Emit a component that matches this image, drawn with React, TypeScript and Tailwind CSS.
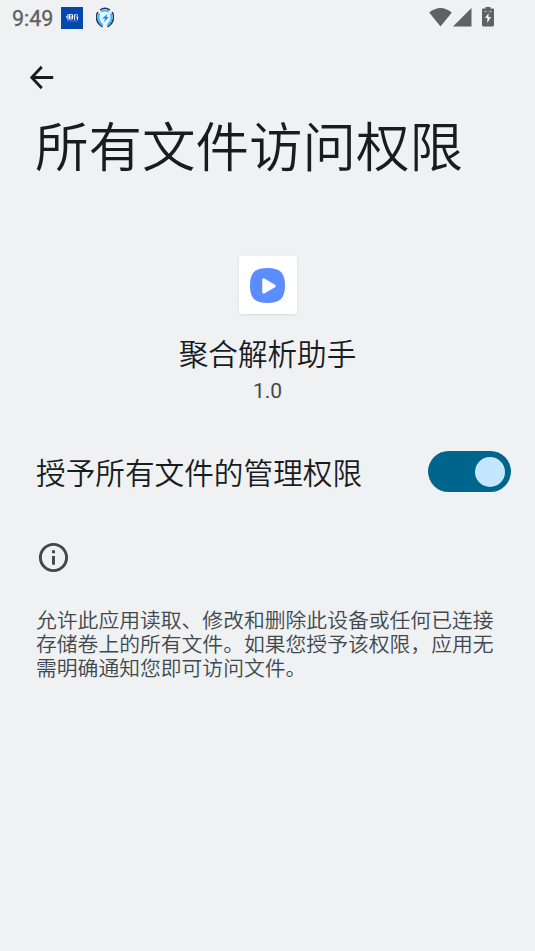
function StatusBar() {
  return (
    <header className="flex h-9 items-center pl-3 pr-[41px] text-[#606163]">
      <span className="w-[42px] pt-px text-[21.5px] leading-[34px] [-webkit-text-stroke:0.3px_#606163]">9:49</span>
      <svg className="ml-[7px] h-[22px] w-[22px]" viewBox="0 0 22 22">
        <rect width="22" height="22" fill="#0647ad" />
        <path d="M7 7v6M5.800 9v2M8.500 7.700h3v4.300h-3zM8.500 10h3M13.700 7.500v5.500M12.800 9.500l1.800-2.500M15.500 8h1.500M15.200 10h2M16.500 10v3" stroke="#fff" strokeWidth="1" fill="none" />
        <path d="M6 14h11" stroke="#7ea1d6" strokeWidth=".6" />
      </svg>
      <svg className="ml-[13px] h-[22px] w-[18px]" viewBox="0 0 18 22">
        <ellipse cx="9" cy="11" rx="7" ry="8.500" fill="#e6f6ff" />
        <path d="M4 3Q9-.5 14 3M1.800 5C-.2 9 .3 14 3.500 17.500l3 2.500M16.200 5c2 4 1.500 9-1.700 12.500l-3 2.500" fill="none" stroke="#243551" strokeWidth="1.500" />
        <path d="M5 4.700Q9 2.200 13 4.700M3.300 6.500c-1.500 4-1 7.500 1.500 10l2 1.500M14.700 6.500c1.500 4 1 7.500-1.500 10l-2 1.500" fill="none" stroke="#45b5fa" strokeWidth="2" />
        <path d="m11.500 7-5.500 4.500h3L8 15l5-5h-2.500z" fill="#218ff2" />
      </svg>
      <div className="ml-auto flex items-center">
        <svg className="mb-px h-[19px] w-[23px]" viewBox="0 0 23 19" fill="currentColor">
          <path d="M.2 4.500Q11.500-4.500 22.800 4.500L11.500 18.500z" />
        </svg>
        <svg className="mb-px ml-px h-[19px] w-[19px]" viewBox="0 0 19 19" fill="currentColor">
          <path d="M18.500 0v18.500H0z" />
        </svg>
        <svg className="mb-[2px] ml-[10px] h-5 w-3" viewBox="0 0 12 20" fill="currentColor">
          <path fillRule="evenodd" d="M3.500 0h5v1.500H11a1 1 0 0 1 1 1V18a1.500 1.500 0 0 1-1.500 1.500h-9A1.500 1.500 0 0 1 0 18V2.500a1 1 0 0 1 1-1h2.500zM2.500 4v.7h2V4zM7.500 4v.7h2V4zM6.500 6 3 11h2.300v5L9 10H6.500z" />
        </svg>
      </div>
    </header>
  );
}

function AppIcon() {
  return (
    <div className="flex h-[58px] w-[58px] items-center justify-center rounded-[3px] bg-white shadow-[0_1px_3px_rgba(0,0,0,0.1)]">
      <svg className="h-[35px] w-[35px]" viewBox="0 0 36 36">
        <path d="M18 0c13 0 18 5 18 18s-5 18-18 18S0 31 0 18 5 0 18 0z" fill="#5c8dff" />
        <path d="M14 12v13l11-6.500z" fill="#fff" stroke="#fff" strokeWidth="2.800" strokeLinejoin="round" />
      </svg>
    </div>
  );
}

function Toggle() {
  return (
    <button
      type="button"
      role="switch"
      aria-checked="true"
      aria-label="授予所有文件的管理权限"
      className="mb-1 flex h-[41px] w-[83px] items-center justify-end rounded-full bg-[#00658d] pr-[6px]"
    >
      <span className="h-[30px] w-[30px] rounded-full bg-[#c4e7ff]" />
    </button>
  );
}

export default function App() {
  return (
    <main className="flex h-[951px] w-[535px] flex-col overflow-hidden bg-[#eff1f3] font-['Roboto','Noto_Sans_CJK_SC_DemiLight','Noto_Sans_CJK_SC',sans-serif] text-[#191c1e]">
      <StatusBar />
      <nav className="flex h-[82px] items-center pl-[25px]">
        <svg className="h-[35px] w-[33px]" viewBox="0 0 24 24" fill="currentColor" preserveAspectRatio="none">
          <path d="M20.500 11H7.330l5.590-5.590L11.500 4l-8 8 8 8 1.410-1.410L7.330 13H20.500z" />
        </svg>
      </nav>
      <h1 className="h-[138px] pl-[35px] pt-[2px] text-[53.5px] font-[350] leading-[58px]">所有文件访问权限</h1>

      <section className="flex flex-col items-center">
        <AppIcon />
        <h2 className="mt-5 text-[29.6px] font-[350] leading-[42px]">聚合解析助手</h2>
        <p className="text-[21px] leading-[31px] text-[#40484d]">1.0</p>
      </section>

      <section className="mt-[44px] flex h-[45px] items-center justify-between pl-9 pr-6">
        <span className="text-[29.65px] font-[350] leading-[44px]">授予所有文件的管理权限</span>
        <Toggle />
      </section>

      <section className="mt-[44px] px-9">
        <svg className="h-[35px] w-[35px]" viewBox="0 0 24 24" fill="#40484d">
          <path d="M11 7h2v2h-2zm0 4h2v6h-2zm1-9C6.480 2 2 6.480 2 12s4.480 10 10 10 10-4.480 10-10S17.520 2 12 2zm0 18c-4.410 0-8-3.590-8-8s3.590-8 8-8 8 3.590 8 8-3.590 8-8 8z" />
        </svg>
        <p className="mt-[33.5px] whitespace-nowrap text-[20.8px] font-[350] leading-[24.3px] text-[#40484d]">
          允许此应用读取、修改和删除此设备或任何已连接
          <br />
          存储卷上的所有文件。如果您授予该权限，应用无
          <br />
          需明确通知您即可访问文件。
        </p>
      </section>
    </main>
  );
}
